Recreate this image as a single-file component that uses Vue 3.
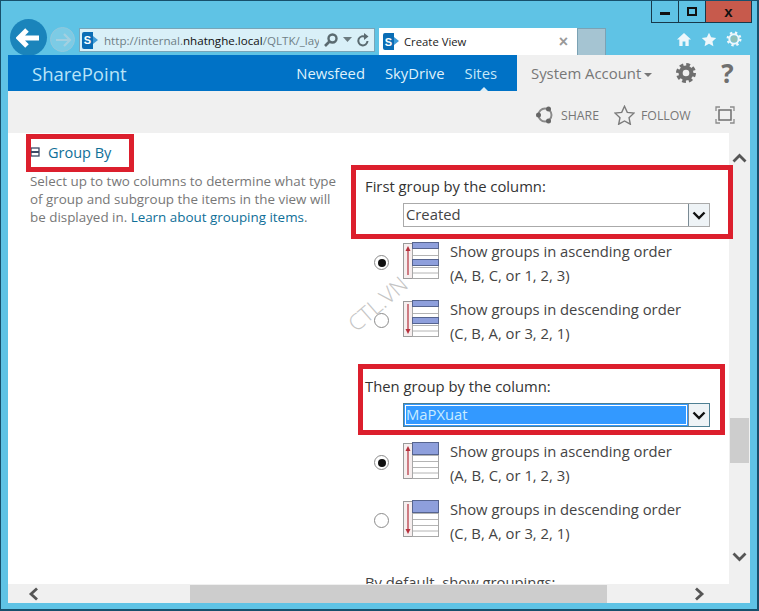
<template>
  <div class="window">
    <div class="caption">
      <div class="caption-btn"><span class="min-glyph"></span></div>
      <div class="caption-btn"><span class="max-glyph"></span></div>
      <div class="caption-btn close">x</div>
    </div>

    <div class="chrome">
      <div class="back">
        <svg width="26" height="22" viewBox="0 0 26 22"><path d="M11 3 3 11l8 8M4 11h19" fill="none" stroke="#fff" stroke-width="5"/></svg>
      </div>
      <div class="forward">
        <svg width="18" height="16" viewBox="0 0 18 16"><path d="M10 2l6 6-6 6M15 8H2" fill="none" stroke="#a3d0e1" stroke-width="2.2"/></svg>
      </div>
      <div class="address">
        <span class="sp-logo">S</span>
        <span class="url">http://internal.<b>nhatnghe.local</b>/QLTK/_lay</span>
        <svg class="addr-ico" width="16" height="16" viewBox="0 0 16 16"><circle cx="9.5" cy="6.5" r="4" fill="none" stroke="#5a6a70" stroke-width="2.4"/><path d="M6.5 9.5 2 14" stroke="#5a6a70" stroke-width="2.6"/></svg>
        <svg class="addr-ico" width="9" height="6" viewBox="0 0 9 6"><path d="M0 0h9L4.5 5z" fill="#6c7b80"/></svg>
        <svg class="addr-ico" width="14" height="15" viewBox="0 0 14 15"><path d="M11.5 8a4.6 4.6 0 1 1-2-4" fill="none" stroke="#5a6a70" stroke-width="2"/><path d="M8 0l4.500 3.500L8 7z" fill="#5a6a70"/></svg>
      </div>
      <div class="tab">
        <span class="sp-logo">S</span>
        <span class="tab-title">Create View</span>
        <span class="tab-x">×</span>
      </div>
      <div class="new-tab"></div>
      <div class="tools">
        <svg width="16" height="15" viewBox="0 0 17 16"><path d="M8.500 1 1 8h2.500v7h3.500v-5h3v5h3.500V8H16z" fill="#eef7fb"/></svg>
        <svg width="16" height="15" viewBox="0 0 24 23"><path d="M12 1l3.300 7.200 7.700.9-5.700 5.300 1.500 7.600L12 18.200 5.200 22l1.500-7.600L1 9.100l7.700-.9z" fill="#eef7fb"/></svg>
        <svg width="16" height="16" viewBox="0 0 24 24"><circle cx="12" cy="12" r="5" fill="#8fc0b8"/><circle cx="12" cy="12" r="7" fill="none" stroke="#eef7fb" stroke-width="3"/><circle cx="12" cy="12" r="9.500" fill="none" stroke="#eef7fb" stroke-width="3.500" stroke-dasharray="3.500 4"/></svg>
      </div>
    </div>

    <div class="page">
      <div class="suite">
        <div class="suite-blue">
          <span class="brand">SharePoint</span>
          <nav class="nav">
            <span>Newsfeed</span>
            <span>SkyDrive</span>
            <span class="current">Sites</span>
          </nav>
        </div>
        <div class="suite-user">
          <span class="account">System Account</span>
          <span class="caret"></span>
          <svg class="gear" width="20" height="20" viewBox="0 0 24 24"><circle cx="12" cy="12" r="6.500" fill="none" stroke="#6f6f6f" stroke-width="5"/><circle cx="12" cy="12" r="10" fill="none" stroke="#6f6f6f" stroke-width="4" stroke-dasharray="4.500 3.350"/></svg>
          <span class="help">?</span>
        </div>
      </div>

      <div class="ribbon">
        <svg width="20" height="20" viewBox="0 0 20 20"><circle cx="10" cy="10" r="6.500" fill="none" stroke="#8a8a8a" stroke-width="2"/><circle cx="3.500" cy="10" r="2.500" fill="#666"/><circle cx="13.500" cy="4" r="2.500" fill="#666"/><circle cx="13.500" cy="16" r="2.500" fill="#666"/></svg>
        <span class="ribbon-text share">SHARE</span>
        <svg class="star" width="21" height="20" viewBox="0 0 24 23"><path d="M12 1.500l3.200 7 7.600.9-5.600 5.200 1.500 7.500L12 18.400l-6.700 3.700 1.500-7.500-5.600-5.200 7.600-.9z" fill="none" stroke="#7b7b7b" stroke-width="1.600"/></svg>
        <span class="ribbon-text">FOLLOW</span>
        <svg class="focus" width="20" height="18" viewBox="0 0 20 18"><path d="M1 5V1h4M15 1h4v4M19 13v4h-4M5 17H1v-4" fill="none" stroke="#8c8c8c" stroke-width="1.300"/><rect x="4" y="4" width="12" height="10" fill="none" stroke="#6f6f6f" stroke-width="1.500"/></svg>
      </div>

      <div class="body">
        <div class="scroller">
          <div class="form">
            <div class="left">
              <h2 class="heading">
                <svg width="10" height="10" viewBox="0 0 10 10"><rect x="1" y="1" width="8" height="8" fill="#fff" stroke="#3d4a66" stroke-width="1.300"/><path d="M1 5h8" stroke="#3d4a66" stroke-width="2"/></svg>
                Group By
              </h2>
              <p class="desc">Select up to two columns to determine what type of group and subgroup the items in the view will be displayed in. <a>Learn about grouping items</a>.</p>
            </div>

            <div class="right">
              <div v-for="(group, g) in groups" :key="group.label" class="group">
                <div class="group-label">{{ group.label }}</div>
                <div class="select" :class="{ focused: group.focused }">
                  <span class="select-value">{{ group.value }}</span>
                  <span class="select-btn">
                    <svg width="14" height="9" viewBox="0 0 14 9"><path d="M1.500 1.500 7 7l5.500-5.500" fill="none" stroke="#111" stroke-width="2.400"/></svg>
                  </span>
                </div>
                <div v-for="order in orders" :key="order.title" class="order">
                  <span class="radio" :class="{ on: order.checked }"></span>
                  <svg class="order-ico" width="37" height="37" viewBox="0 0 37 37">
                    <rect x="0.500" y="1.500" width="9" height="35" fill="#f6eeee" stroke="#9a9a9a"/>
                    <path :d="order.up ? 'M5 33V7' : 'M5 4v26'" stroke="#b5303c" stroke-width="1.200"/>
                    <path :d="order.up ? 'M5 4 2.500 9h5z' : 'M5 34l-2.500-5h5z'" fill="#b5303c"/>
                    <rect x="9.500" y="6.500" width="26" height="30" fill="#fff" stroke="#a8a8a8"/>
                    <path d="M10 13.500h25M10 19.500h25M10 25.500h25M10 31h25" stroke="#b4b4b4"/>
                    <template v-if="g === 0">
                      <rect x="9.500" y="0.500" width="26" height="6" fill="#8e9fdc" stroke="#56648f"/>
                      <rect x="9.500" y="17.500" width="26" height="6" fill="#8e9fdc" stroke="#56648f"/>
                    </template>
                    <rect v-else x="9.500" y="0.500" width="26" height="12" fill="#8e9fdc" stroke="#56648f"/>
                  </svg>
                  <div class="order-text">
                    <div>{{ order.title }}</div>
                    <div>{{ order.sample }}</div>
                  </div>
                </div>
              </div>
              <div class="default-line">By default, show groupings:</div>
            </div>
          </div>

          <div class="watermark">CTL.VN</div>
        </div>

        <div class="vscroll">
          <svg width="15" height="10" viewBox="0 0 15 10"><path d="M1.500 8.500 7.500 2.500l6 6" fill="none" stroke="#555" stroke-width="2.800"/></svg>
          <div class="vtrack"><div class="vthumb"></div></div>
          <svg width="15" height="10" viewBox="0 0 15 10"><path d="M1.500 1.500l6 6 6-6" fill="none" stroke="#555" stroke-width="2.800"/></svg>
        </div>

        <div class="mark mark-heading"></div>
        <div class="mark mark-first"></div>
        <div class="mark mark-then"></div>
      </div>

      <div class="hscroll">
        <svg width="11" height="14" viewBox="0 0 11 14"><path d="M9 1.500 3 7l6 5.500" fill="none" stroke="#555" stroke-width="2.800"/></svg>
        <div class="htrack"><div class="hthumb"></div></div>
        <svg width="11" height="14" viewBox="0 0 11 14"><path d="M2 1.500 8 7l-6 5.500" fill="none" stroke="#555" stroke-width="2.800"/></svg>
        <div class="hcorner"></div>
      </div>
    </div>
  </div>
</template>

<script setup>
const orders = [
  { title: 'Show groups in ascending order', sample: '(A, B, C, or 1, 2, 3)', up: true, checked: true },
  { title: 'Show groups in descending order', sample: '(C, B, A, or 3, 2, 1)', up: false, checked: false },
]

const groups = [
  { label: 'First group by the column:', value: 'Created', focused: false },
  { label: 'Then group by the column:', value: 'MaPXuat', focused: true },
]
</script>

<style>
html, body { margin: 0; background: #5fc1e4; }
</style>

<style scoped>
.window {
  position: relative;
  box-sizing: border-box;
  width: 759px;
  height: 611px;
  overflow: hidden;
  padding: 0 7px 0 7px;
  background: #5fc3e5;
  border: 1px solid #17506c;
  border-width: 1px 2px 2px 1px;
  font-family: "Open Sans", "Noto Sans", sans-serif;
}

.caption {
  position: absolute;
  top: 0;
  right: 5px;
  display: flex;
  height: 21px;
  border: 1px solid #17384a;
  border-top: 0;
}
.caption-btn {
  display: flex;
  box-sizing: border-box;
  width: 27px;
  align-items: center;
  justify-content: center;
  border-right: 1px solid #17384a;
}
.caption-btn.close {
  width: 45px;
  border-right: 0;
  background: #c75a4c;
  color: #111;
  font: bold 15px "Liberation Sans", sans-serif;
}
.min-glyph { width: 10px; height: 3px; margin-top: 4px; background: #111; }
.max-glyph { width: 6px; height: 5px; border: 2px solid #111; }

.chrome {
  display: flex;
  height: 54px;
  align-items: flex-end;
  box-sizing: border-box;
}
.back {
  display: flex;
  width: 37px;
  height: 37px;
  margin: 0 0 -1px 2px;
  align-items: center;
  justify-content: center;
  flex: none;
  border-radius: 50%;
  background: #1a84bb;
}
.forward {
  display: flex;
  box-sizing: border-box;
  width: 25px;
  height: 25px;
  margin: 0 0 3px 3px;
  align-items: center;
  justify-content: center;
  flex: none;
  border-radius: 50%;
  border: 1px solid #93c8dc;
  background: #7ccbe5;
}
.address {
  display: flex;
  box-sizing: border-box;
  width: 296px;
  height: 24px;
  margin: 0 4px 3px 4px;
  padding: 0 4px 0 2px;
  align-items: center;
  flex: none;
  background: #d9f0f8;
  border: 1px solid #78a5b8;
}
.sp-logo {
  position: relative;
  display: inline-flex;
  box-sizing: border-box;
  width: 11px;
  height: 17px;
  margin-right: 5px;
  align-items: center;
  justify-content: center;
  flex: none;
  background: #0a6db5;
  border-radius: 2px 0 0 2px;
  color: #fff;
  font: bold 11px "Liberation Sans", sans-serif;
}
.sp-logo::after {
  content: "";
  position: absolute;
  left: 100%;
  top: 4px;
  border-style: solid;
  border-width: 4.500px 0 4.500px 5px;
  border-color: transparent transparent transparent #3f9ad6;
}
.url {
  flex: 1;
  margin-left: 6px;
  overflow: hidden;
  white-space: nowrap;
  color: #6f7f86;
  font-size: 11.6px;
}
.url b { color: #111; font-weight: 400; }
.addr-ico { margin-left: 4px; flex: none; }

.tab {
  display: flex;
  box-sizing: border-box;
  width: 198px;
  height: 27px;
  padding: 0 9px 0 4px;
  align-items: center;
  flex: none;
  background: #fff;
}
.tab-title { flex: 1; margin-left: 5px; color: #222; font-size: 11.3px; }
.tab-x { color: #999; font: bold 16px "Liberation Sans", sans-serif; }
.new-tab {
  box-sizing: border-box;
  width: 29px;
  height: 27px;
  flex: none;
  background: #a5c4d2;
  border: 1px solid #7ba2b4;
  border-bottom: 0;
}
.tools {
  display: flex;
  margin: 0 8px 8px auto;
  gap: 9px;
  align-items: center;
}

.page { background: #f0f0f0; }

.suite { display: flex; height: 36px; }
.suite-blue {
  display: flex;
  width: 509px;
  padding-left: 24px;
  box-sizing: border-box;
  align-items: center;
  justify-content: space-between;
  background: #0072c6;
}
.brand { color: #b9e4f8; font-size: 18.5px; }
.nav { display: flex; gap: 20px; padding-right: 20px; color: #dff1fb; font-size: 14.8px; }
.nav span { position: relative; }
.nav .current { color: #c6e8f8; }
.nav .current::after {
  content: "";
  position: absolute;
  left: 15px;
  bottom: -8px;
  border: 4px solid transparent;
  border-top: 0;
  border-bottom-color: #dceef7;
}
.suite-user {
  display: flex;
  flex: 1;
  padding-left: 14px;
  align-items: center;
  color: #777;
}
.account { font-size: 14.9px; }
.caret {
  margin: 3px 0 0 3px;
  border: 4.500px solid transparent;
  border-bottom: 0;
  border-top-color: #777;
}
.gear { margin-left: 24px; }
.help {
  margin-left: 25px;
  color: #6f6f6f;
  font: bold 26px "Open Sans", sans-serif;
}

.ribbon {
  display: flex;
  box-sizing: border-box;
  height: 42px;
  padding: 6px 15px 0 527px;
  align-items: center;
  color: #777;
}
.ribbon-text { margin-left: 6px; font-size: 12.3px; }
.share { margin-left: 6px; }
.star { margin-left: 15px; }
.focus { margin-left: auto; }

.body { position: relative; display: flex; height: 451px; }
.scroller {
  position: relative;
  flex: 1;
  min-width: 0;
  overflow: hidden;
  background: #fff;
}
.form { display: flex; }
.left {
  box-sizing: border-box;
  width: 357px;
  padding: 9px 22px 0 22px;
  flex: none;
}
.heading {
  display: flex;
  margin: 0;
  gap: 8px;
  align-items: center;
  height: 20px;
  color: #0f6f98;
  font-size: 14.5px;
  font-weight: 400;
}
.desc {
  margin: 10px 0 0;
  color: #777;
  font-size: 13.4px;
  line-height: 18px;
}
.desc a { color: #0f6f98; }

.right { flex: 1; padding-top: 44px; color: #444; font-size: 14.8px; }
.group { margin-bottom: 30px; }
.group-label { height: 20px; line-height: 18px; color: #333; }
.select {
  display: flex;
  box-sizing: border-box;
  width: 307px;
  height: 24px;
  margin: 6px 0 14px 38px;
  border: 1px solid #aaa;
  color: #444;
}
.select-value { flex: 1; padding-left: 2px; line-height: 20px; }
.select.focused { border-color: #4d7f93; }
.select.focused .select-value {
  background: #3399ff;
  color: #c9ecff;
  outline: 1px solid #fff;
  outline-offset: -2px;
}
.select-btn {
  display: flex;
  box-sizing: border-box;
  width: 21px;
  align-items: center;
  justify-content: center;
  background: #eef3f6;
  border-left: 1px solid #7a8a94;
}
.order {
  display: grid;
  grid-template-columns: 15px 37px 1fr;
  column-gap: 14px;
  height: 48px;
  margin-bottom: 10px;
  padding-left: 9px;
  align-items: start;
  line-height: 23.5px;
}
.order:last-child { margin-bottom: 0; }
.radio {
  position: relative;
  box-sizing: border-box;
  width: 15px;
  height: 15px;
  margin-top: 14px;
  border: 1px solid #8b8b8b;
  border-radius: 50%;
  background: #fff;
}
.radio.on::after {
  content: "";
  position: absolute;
  inset: 2.500px;
  border-radius: 50%;
  background: #111;
}
.order-ico { margin-top: 1px; }
.order-text { margin: -1px 0 0 -4px; }
.default-line { margin-top: -5px; color: #444; }

.watermark {
  position: absolute;
  left: 369px;
  top: 170px;
  transform: translate(-50%, -50%) rotate(-41deg);
  color: #c4c4c4;
  font-size: 22px;
  font-weight: 300;
}
.mark { position: absolute; box-sizing: border-box; border: 5px solid #dc1f2d; pointer-events: none; }
.mark-heading { left: 18px; top: 1px; width: 108px; height: 38px; }
.mark-first { left: 343px; top: 32px; width: 382px; height: 74px; }
.mark-then { left: 350px; top: 231px; width: 367px; height: 71px; }

.vscroll {
  display: flex;
  flex-direction: column;
  box-sizing: border-box;
  width: 21px;
  padding: 20px 0 22px;
  align-items: center;
}
.vtrack { flex: 1; width: 100%; padding-top: 255px; box-sizing: border-box; }
.vthumb { width: 19px; height: 45px; margin-left: 1px; background: #cdcdcd; }

.hscroll { display: flex; height: 19px; align-items: center; padding-left: 20px; }
.htrack { flex: 0 0 655px; height: 18px; }
.hthumb { width: 417px; height: 100%; margin-left: 151px; background: #cdcdcd; }
.hcorner { width: 36px; }
</style>
